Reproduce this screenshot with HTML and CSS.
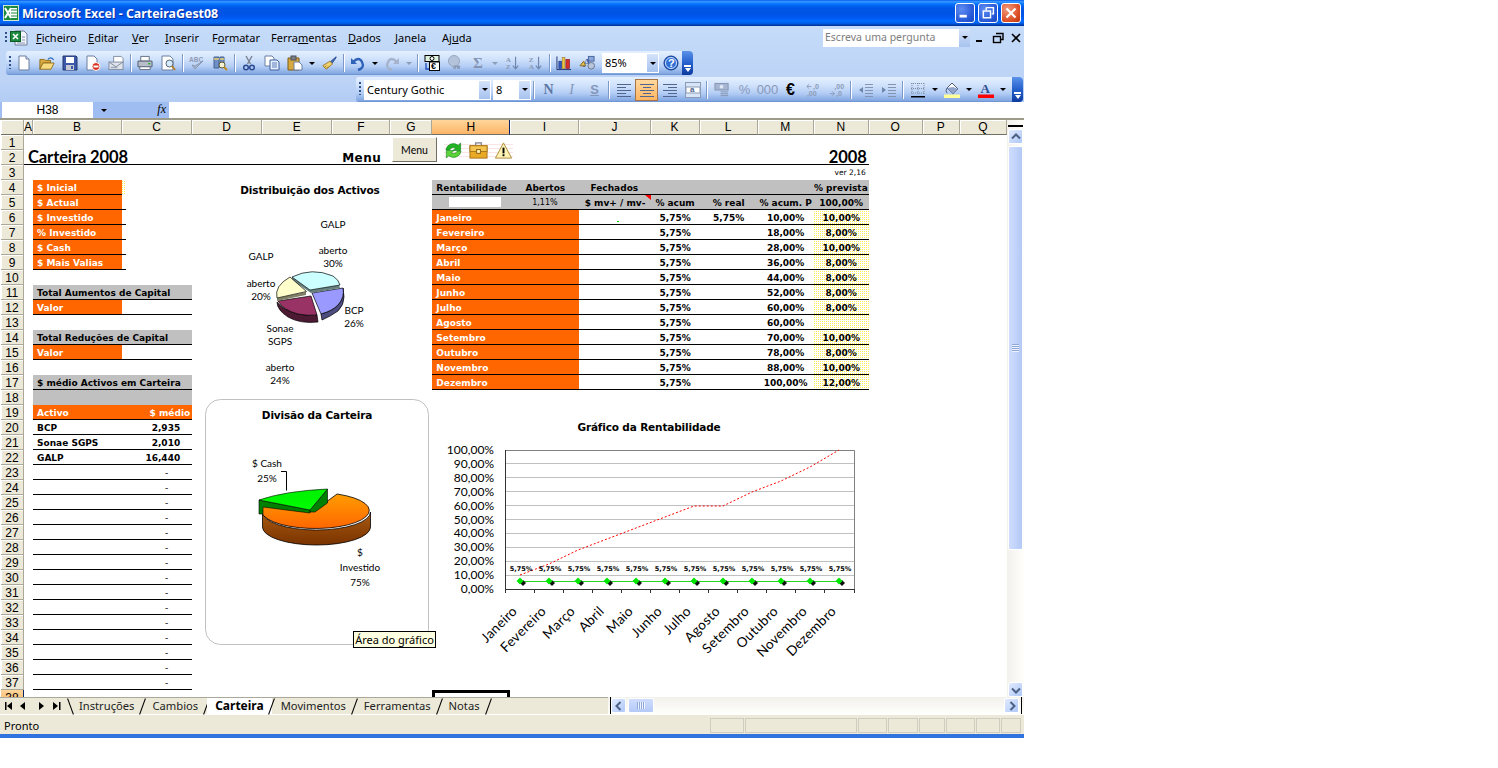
FILE: index.html
```html
<!DOCTYPE html>
<html lang="pt">
<head>
<meta charset="utf-8">
<title>Microsoft Excel - CarteiraGest08</title>
<link rel="stylesheet" href="styles.css">
</head>
<body>
<div class="window">
  <header class="titlebar">
    <svg class="appicon" viewBox="0 0 16 16"><rect x="0.5" y="0.5" width="15" height="15" fill="#1c8a3e" stroke="#cfe8d4"/><rect x="7" y="3" width="7" height="10" fill="#fff"/><path d="M2 3l6 10M8 3L2 13" stroke="#fff" stroke-width="2"/><path d="M8 5h6M8 8h6M8 11h6" stroke="#1c8a3e"/></svg>
    <span class="wintitle">Microsoft Excel - CarteiraGest08</span>
    <span class="capbtns">
      <span class="cap"><svg viewBox="0 0 20 20"><rect x="4" y="12" width="8" height="3" fill="#fff"/></svg></span>
      <span class="cap"><svg viewBox="0 0 20 20"><path d="M8 4h8v7h-2M8 4v3" fill="none" stroke="#fff" stroke-width="1.6"/><rect x="4.8" y="7.8" width="8" height="7.5" fill="none" stroke="#fff" stroke-width="1.6"/></svg></span>
      <span class="cap close"><svg viewBox="0 0 20 20"><path d="M5 5l10 10M15 5L5 15" stroke="#fff" stroke-width="2.4"/></svg></span>
    </span>
  </header>

  <div class="command">
    <div class="menubar">
      <span class="grip"></span>
      <svg class="docicon" viewBox="0 0 18 16"><path d="M5 1h9l3 3v11H5z" fill="#f2f4fb" stroke="#6e7f9e"/><rect x="0.5" y="1.5" width="10" height="10" fill="#1c8a3e" stroke="#0d5c25"/><path d="M3 4l5 5M8 4L3 9" stroke="#fff" stroke-width="1.6"/><path d="M12 7h3M12 10h3M7 13h8" stroke="#8494b0"/></svg>
      <nav class="menus">
        <span class="menu m1"><u>F</u>icheiro</span>
        <span class="menu m2"><u>E</u>ditar</span>
        <span class="menu m3"><u>V</u>er</span>
        <span class="menu m4"><u>I</u>nserir</span>
        <span class="menu m5">F<u>o</u>rmatar</span>
        <span class="menu m6">Ferra<u>m</u>entas</span>
        <span class="menu m7"><u>D</u>ados</span>
        <span class="menu m8"><u>J</u>anela</span>
        <span class="menu m9">Aj<u>u</u>da</span>
      </nav>
      <span class="ask"><span class="asktext">Escreva uma pergunta</span><span class="askdrop"><i class="dd-tri"></i></span></span>
      <span class="doccaps">
        <svg viewBox="0 0 12 12"><rect x="2" y="8" width="6" height="2" fill="#000"/></svg>
        <svg viewBox="0 0 12 12"><path d="M4 1.5h7v6H9" fill="none" stroke="#000" stroke-width="1.4"/><rect x="1.5" y="4.5" width="7" height="6" fill="none" stroke="#000" stroke-width="1.4"/></svg>
        <svg viewBox="0 0 12 12"><path d="M2 2l8 8M10 2l-8 8" stroke="#000" stroke-width="1.6"/></svg>
      </span>
    </div>

    <div class="toolbar tb1">
      <span class="tgrip"></span>
      <span class="btn"><svg viewBox="0 0 16 16"><path d="M3 1h7l3 3v11H3z" fill="#fff" stroke="#6b7f9f"/><path d="M10 1v3h3" fill="#dfe6f4" stroke="#6b7f9f"/></svg></span>
      <span class="btn"><svg viewBox="0 0 18 16"><path d="M1 4h5l1 1h6v3H5l-4 7z" fill="#d9a93f" stroke="#8a6a1a"/><path d="M1 15l3.5-7H17l-3.5 7z" fill="#f9dc82" stroke="#8a6a1a"/><path d="M10 4q2.500-3 5-1l1.500 1.500" fill="none" stroke="#2b6cc4" stroke-width="1.300"/></svg></span>
      <span class="btn"><svg viewBox="0 0 16 16"><path d="M1 1h13l1 1v13H1z" fill="#3c58a8" stroke="#24366e"/><rect x="4" y="2" width="8" height="6" fill="#fff"/><rect x="4" y="10" width="8" height="5" fill="#c8c8d0"/><rect x="9" y="11" width="2" height="3" fill="#3c58a8"/></svg></span>
      <span class="btn"><svg viewBox="0 0 16 16"><path d="M2 1h7l3 3v11H2z" fill="#fff" stroke="#6b7f9f"/><circle cx="11" cy="11.500" r="4" fill="#d8301c" stroke="#fff"/><rect x="8.500" y="10.500" width="5" height="2" fill="#fff"/></svg></span>
      <span class="btn"><svg viewBox="0 0 17 16"><path d="M6 1h8l2 2v5H6z" fill="#fff" stroke="#7f8ba0"/><rect x="1" y="7" width="15" height="8" fill="#dfe3ea" stroke="#7f8ba0"/><path d="M1 7l7.500 5L16 7" fill="none" stroke="#7f8ba0"/><rect x="3" y="12" width="7" height="1.500" fill="#9aa7bd"/></svg></span>
      <span class="sep"></span>
      <span class="btn"><svg viewBox="0 0 17 16"><path d="M4 1h9v5H4z" fill="#fff" stroke="#5f6b80"/><path d="M1 6h15v6H1z" fill="#b7bdc9" stroke="#4f5a6e"/><path d="M3 12h11v3H3z" fill="#fff" stroke="#5f6b80"/><rect x="12" y="8" width="2" height="1.500" fill="#18b018"/></svg></span>
      <span class="btn"><svg viewBox="0 0 16 16"><path d="M2 1h8l3 3v11H2z" fill="#fff" stroke="#6b7f9f"/><circle cx="9.500" cy="8.500" r="3.500" fill="#d5ecff" stroke="#5a6472"/><path d="M12 11l3 4" stroke="#b3802d" stroke-width="2"/></svg></span>
      <span class="sep"></span>
      <span class="btn"><svg viewBox="0 0 16 16"><text x="0" y="6.500" class="ic-t" fill="#8d9ab6">ABC</text><path d="M3 10l3 4 8-8-8 5z" fill="#a9b6cf" stroke="#8d9ab6"/></svg></span>
      <span class="btn"><svg viewBox="0 0 16 16"><path d="M2 2h5v11H2zM8 2h4v8H8z" fill="#6f8fc8" stroke="#46608f"/><path d="M2 4h5M8 4h4" stroke="#e7d06c" stroke-width="1.500"/><circle cx="10" cy="10" r="3" fill="#f2f2d0" stroke="#5f5a30"/><path d="M12 12l3 3" stroke="#c08a20" stroke-width="2"/></svg></span>
      <span class="sep"></span>
      <span class="btn"><svg viewBox="0 0 16 16"><path d="M5 1l4.500 8M11 1L6.500 9" stroke="#7a8290" stroke-width="1.400" fill="none"/><circle cx="5" cy="12.500" r="2.300" fill="none" stroke="#2c4a93" stroke-width="1.500"/><circle cx="11" cy="12.500" r="2.300" fill="none" stroke="#2c4a93" stroke-width="1.500"/></svg></span>
      <span class="btn"><svg viewBox="0 0 16 16"><path d="M1 1h7l2 2v8H1z" fill="#fff" stroke="#6b7f9f"/><path d="M6 5h7l2 2v8H6z" fill="#e6f0ff" stroke="#3d5f9e"/><path d="M8 8h5M8 10h5M8 12h5" stroke="#5c7db8"/></svg></span>
      <span class="btn"><svg viewBox="0 0 16 16"><path d="M1 3h11v12H1z" fill="#d7a93e" stroke="#7a5a1a"/><rect x="4" y="1" width="5" height="4" fill="#7a7f8a" stroke="#4b4f58"/><path d="M7 7h5l3 3v5H7z" fill="#fff" stroke="#6b7f9f"/></svg></span>
      <span class="dd"><i class="dd-tri"></i></span>
      <span class="btn"><svg viewBox="0 0 18 16"><path d="M17 1l-7 6 2 2 5-7z" fill="#4a6fb8" stroke="#2c4a93"/><path d="M10 6L2 11l4 4 7-6z" fill="#efd06a" stroke="#94752a"/><path d="M4 13l2-2M6 14l2-2" stroke="#94752a"/></svg></span>
      <span class="sep"></span>
      <span class="btn"><svg viewBox="0 0 16 16"><path d="M3 7q6-6 9 0t-4 8" fill="none" stroke="#2e62b8" stroke-width="2.400"/><path d="M1 3v6h6z" fill="#2e62b8"/></svg></span>
      <span class="dd"><i class="dd-tri"></i></span>
      <span class="btn"><svg viewBox="0 0 16 16"><path d="M13 7q-6-6-9 0t4 8" fill="none" stroke="#a5b4cc" stroke-width="2.400"/><path d="M15 3v6H9z" fill="#a5b4cc"/></svg></span>
      <span class="dd off"><i class="dd-tri"></i></span>
      <span class="sep"></span>
      <span class="btn"><svg viewBox="0 0 16 16"><rect x="1" y="0.500" width="14" height="6" fill="#dff2df" stroke="#000"/><circle cx="8" cy="3.500" r="2" fill="#fff" stroke="#000"/><rect x="5.500" y="7" width="10" height="8.500" fill="#fff" stroke="#000"/><text x="7" y="14" class="ic-b">€</text><path d="M2 8v6h3" fill="none" stroke="#1f49b8" stroke-width="1.300"/></svg></span>
      <span class="btn"><svg viewBox="0 0 16 16"><circle cx="7" cy="6" r="5.500" fill="#b4c3da" stroke="#98a7c0"/><path d="M7 11q4 1 6 0M6 13h3M10 13h3" stroke="#8a99b3" stroke-width="1.500" fill="none"/></svg></span>
      <span class="btn"><span class="glyph gray-sig">Σ</span></span>
      <span class="dd off"><i class="dd-tri"></i></span>
      <span class="btn"><svg viewBox="0 0 18 16"><text x="2" y="7" class="ic-m" fill="#8a99b3">A</text><text x="2" y="15" class="ic-m" fill="#8a99b3">Z</text><path d="M13 1v13M10 11l3 3.500 3-3.500" fill="none" stroke="#6f86ad" stroke-width="1.300"/></svg></span>
      <span class="btn"><svg viewBox="0 0 18 16"><text x="2" y="7" class="ic-m" fill="#8a99b3">Z</text><text x="2" y="15" class="ic-m" fill="#8a99b3">A</text><path d="M13 1v13M10 11l3 3.500 3-3.500" fill="none" stroke="#6f86ad" stroke-width="1.300"/></svg></span>
      <span class="sep"></span>
      <span class="btn"><svg viewBox="0 0 17 16"><path d="M1 1v14h15" fill="none" stroke="#1d2f6b"/><rect x="3" y="6" width="3" height="8" fill="#2e55c0" stroke="#1d2f6b" stroke-width=".5"/><rect x="6.500" y="2" width="3" height="12" fill="#efc947" stroke="#806515" stroke-width=".5"/><rect x="10.500" y="4" width="4" height="10" fill="#d32f2f" stroke="#7a1010" stroke-width=".5"/></svg></span>
      <span class="btn"><svg viewBox="0 0 17 16"><text x="4" y="12" class="ic-l" fill="#3b5ba6">A</text><path d="M1 11l4-5 2 5z" fill="#e4c050" stroke="#86691a"/><circle cx="13" cy="11" r="3.500" fill="#b9c6dc" stroke="#64748f"/><rect x="10" y="1" width="6" height="5" fill="#8aa5da" stroke="#47639b"/></svg></span>
      <span class="combo zoombox"><span class="combotext">85%</span><span class="combodrop"><i class="dd-tri"></i></span></span>
      <span class="btn"><svg viewBox="0 0 16 16"><circle cx="8" cy="8" r="7" fill="#2f6fd4" stroke="#12388c"/><circle cx="8" cy="8" r="5.500" fill="none" stroke="#cfe1ff"/><text x="5" y="12" class="ic-q">?</text></svg></span>
      <span class="chevron"><i></i><i class="tri"></i></span>
    </div>

    <div class="toolbar tb2">
      <span class="tgrip"></span>
      <span class="combo fontbox"><span class="combotext">Century Gothic</span><span class="combodrop"><i class="dd-tri"></i></span></span>
      <span class="combo sizebox"><span class="combotext">8</span><span class="combodrop"><i class="dd-tri"></i></span></span>
      <span class="sep"></span>
      <span class="btn"><span class="glyph fmt bold">N</span></span>
      <span class="btn"><span class="glyph fmt ital">I</span></span>
      <span class="btn"><span class="glyph fmt undl">S</span></span>
      <span class="sep"></span>
      <span class="btn"><svg viewBox="0 0 16 16"><path d="M1 2.500h14M1 5.500h9M1 8.500h14M1 11.500h9M1 14.500h14" stroke="#50668f"/></svg></span>
      <span class="btn on"><svg viewBox="0 0 16 16"><path d="M1 2.500h14M4 5.500h8M1 8.500h14M4 11.500h8M1 14.500h14" stroke="#50668f"/></svg></span>
      <span class="btn"><svg viewBox="0 0 16 16"><path d="M1 2.500h14M6 5.500h9M1 8.500h14M6 11.500h9M1 14.500h14" stroke="#50668f"/></svg></span>
      <span class="btn"><svg viewBox="0 0 16 16"><rect x="0.500" y="0.500" width="15" height="15" fill="#d8e4f7" stroke="#8a9bb8"/><rect x="1" y="5" width="14" height="6" fill="#fff" stroke="#8a9bb8"/><text x="5" y="10" class="ic-s" fill="#50668f">a</text></svg></span>
      <span class="sep"></span>
      <span class="btn"><svg viewBox="0 0 17 16"><rect x="1" y="1" width="14" height="7" fill="#a6b6d2" stroke="#8393b0"/><circle cx="8" cy="4.500" r="2" fill="#dfe6f4"/><path d="M7 10h8M7 12h8M7 14h8" stroke="#8393b0"/></svg></span>
      <span class="btn"><span class="glyph pct">%</span></span>
      <span class="btn"><span class="glyph pct">000</span></span>
      <span class="btn"><span class="glyph euro">€</span></span>
      <span class="btn"><svg viewBox="0 0 18 16"><path d="M1 4h5M1 4l2.500-2.500M1 4l2.500 2.500" fill="none" stroke="#8b9bb8"/><text x="8" y="7" class="ic-s" fill="#8b9bb8">,0</text><text x="1" y="15" class="ic-s" fill="#8b9bb8">,00</text></svg></span>
      <span class="btn"><svg viewBox="0 0 18 16"><text x="6" y="7" class="ic-s" fill="#8b9bb8">,00</text><path d="M1 12h5M6 12L3.500 9.500M6 12l-2.500 2.500" fill="none" stroke="#8b9bb8"/><text x="8" y="15" class="ic-s" fill="#8b9bb8">,0</text></svg></span>
      <span class="sep"></span>
      <span class="btn"><svg viewBox="0 0 16 16"><path d="M7 2.500h8M7 5.500h8M7 8.500h8M7 11.500h8M7 14.500h8" stroke="#8393b0"/><path d="M1 8l4-3v6z" fill="#6f86ad"/></svg></span>
      <span class="btn"><svg viewBox="0 0 16 16"><path d="M7 2.500h8M7 5.500h8M7 8.500h8M7 11.500h8M7 14.500h8" stroke="#8393b0"/><path d="M5 8L1 5v6z" fill="#6f86ad"/></svg></span>
      <span class="sep"></span>
      <span class="btn"><svg viewBox="0 0 16 16"><path d="M1 1.500h14M1 6.500h14M1 11h14M2 1v12M8 1v12M14 1v12" stroke="#7f8ba0" stroke-dasharray="1 1"/><rect x="1" y="14" width="14" height="1.500" fill="#000"/></svg></span>
      <span class="dd"><i class="dd-tri"></i></span>
      <span class="btn"><svg viewBox="0 0 16 16"><path d="M8 1l6 6-5 5-6-6z" fill="#fff" stroke="#52607c"/><path d="M3 6l6-1 5 2-5 5z" fill="#8fa5cc"/><path d="M3 6q-2 3 0 5" stroke="#52607c" fill="none"/><rect x="0" y="12.500" width="16" height="3.500" fill="#ffff99"/></svg></span>
      <span class="dd"><i class="dd-tri"></i></span>
      <span class="btn"><svg viewBox="0 0 16 16"><text x="2.500" y="11" class="ic-a" fill="#2d4a8f">A</text><rect x="0" y="12.500" width="16" height="3.500" fill="#ff0000"/></svg></span>
      <span class="dd"><i class="dd-tri"></i></span>
      <span class="chevron"><i></i><i class="tri"></i></span>
    </div>

    <div class="formula">
      <span class="namebox">H38</span>
      <span class="namedrop"><i class="dd-tri"></i></span>
      <span class="fx">fx</span>
      <span class="input"></span>
    </div>
  </div>

  <div class="workarea">
    <div class="sheet">
      <table class="grid">
        <colgroup>
          <col class="w-h"><col class="w-a"><col class="w-b"><col class="w-c"><col class="w-c"><col class="w-c"><col class="w-f"><col class="w-g"><col class="w-hh"><col class="w-i"><col class="w-j"><col class="w-k"><col class="w-l"><col class="w-m"><col class="w-n"><col class="w-o"><col class="w-p"><col class="w-q">
        </colgroup>
        <tr class="heads"><th></th><th>A</th><th>B</th><th>C</th><th>D</th><th>E</th><th>F</th><th>G</th><th class="hi">H</th><th>I</th><th>J</th><th>K</th><th>L</th><th>M</th><th>N</th><th>O</th><th>P</th><th>Q</th></tr>
        <tr><th>1</th><td colspan="17"></td></tr>
        <tr><th>2</th><td class="bb big" colspan="5">Carteira 2008</td><td class="bb menuword">Menu</td><td class="bb" colspan="7"></td><td class="bb big right">2008</td><td colspan="3"></td></tr>
        <tr><th>3</th><td colspan="13"></td><td class="small right">ver 2,16</td><td colspan="3"></td></tr>
        <tr><th>4</th><td></td><td class="or">$ Inicial</td><td class="dotc"></td><td colspan="4"></td><td class="gr bb">Rentabilidade</td><td class="gr bb pi">Abertos</td><td class="gr bb pj">Fechados</td><td class="gr bb" colspan="3"></td><td class="gr bb right tight">% prevista</td><td colspan="3"></td></tr>
        <tr><th>5</th><td></td><td class="or">$ Actual</td><td></td><td colspan="4"></td><td class="gr bb pw"><i class="whitebox"></i></td><td class="gr bb ctr plain">1,11%</td><td class="gr bb ctr note">$ mv+ / mv-</td><td class="gr bb ctr">% acum</td><td class="gr bb ctr">% real</td><td class="gr bb ctr">% acum. P</td><td class="gr bb ctr">100,00%</td><td colspan="3"></td></tr>
        <tr><th>6</th><td></td><td class="or">$ Investido</td><td></td><td colspan="4"></td><td class="or2" colspan="2">Janeiro</td><td class="bb ctr"><i class="tick"></i></td><td class="bb ctr b">5,75%</td><td class="bb ctr b">5,75%</td><td class="bb ctr b">10,00%</td><td class="bb ctr b dots">10,00%</td><td colspan="3"></td></tr>
        <tr><th>7</th><td></td><td class="or">% Investido</td><td></td><td colspan="4"></td><td class="or2" colspan="2">Fevereiro</td><td class="bb"></td><td class="bb ctr b">5,75%</td><td class="bb"></td><td class="bb ctr b">18,00%</td><td class="bb ctr b dots">8,00%</td><td colspan="3"></td></tr>
        <tr><th>8</th><td></td><td class="or">$ Cash</td><td></td><td colspan="4"></td><td class="or2" colspan="2">Março</td><td class="bb"></td><td class="bb ctr b">5,75%</td><td class="bb"></td><td class="bb ctr b">28,00%</td><td class="bb ctr b dots">10,00%</td><td colspan="3"></td></tr>
        <tr><th>9</th><td></td><td class="or">$ Mais Valias</td><td></td><td colspan="4"></td><td class="or2" colspan="2">Abril</td><td class="bb"></td><td class="bb ctr b">5,75%</td><td class="bb"></td><td class="bb ctr b">36,00%</td><td class="bb ctr b dots">8,00%</td><td colspan="3"></td></tr>
        <tr><th>10</th><td colspan="7"></td><td class="or2" colspan="2">Maio</td><td class="bb"></td><td class="bb ctr b">5,75%</td><td class="bb"></td><td class="bb ctr b">44,00%</td><td class="bb ctr b dots">8,00%</td><td colspan="3"></td></tr>
        <tr><th>11</th><td></td><td class="gr bb" colspan="2">Total Aumentos de Capital</td><td colspan="4"></td><td class="or2" colspan="2">Junho</td><td class="bb"></td><td class="bb ctr b">5,75%</td><td class="bb"></td><td class="bb ctr b">52,00%</td><td class="bb ctr b dots">8,00%</td><td colspan="3"></td></tr>
        <tr><th>12</th><td></td><td class="or2">Valor</td><td class="bb"></td><td colspan="4"></td><td class="or2" colspan="2">Julho</td><td class="bb"></td><td class="bb ctr b">5,75%</td><td class="bb"></td><td class="bb ctr b">60,00%</td><td class="bb ctr b dots">8,00%</td><td colspan="3"></td></tr>
        <tr><th>13</th><td colspan="7"></td><td class="or2" colspan="2">Agosto</td><td class="bb"></td><td class="bb ctr b">5,75%</td><td class="bb"></td><td class="bb ctr b">60,00%</td><td class="bb ctr b dots"></td><td colspan="3"></td></tr>
        <tr><th>14</th><td></td><td class="gr bb" colspan="2">Total Reduções de Capital</td><td colspan="4"></td><td class="or2" colspan="2">Setembro</td><td class="bb"></td><td class="bb ctr b">5,75%</td><td class="bb"></td><td class="bb ctr b">70,00%</td><td class="bb ctr b dots">10,00%</td><td colspan="3"></td></tr>
        <tr><th>15</th><td></td><td class="or2">Valor</td><td class="bb"></td><td colspan="4"></td><td class="or2" colspan="2">Outubro</td><td class="bb"></td><td class="bb ctr b">5,75%</td><td class="bb"></td><td class="bb ctr b">78,00%</td><td class="bb ctr b dots">8,00%</td><td colspan="3"></td></tr>
        <tr><th>16</th><td colspan="7"></td><td class="or2" colspan="2">Novembro</td><td class="bb"></td><td class="bb ctr b">5,75%</td><td class="bb"></td><td class="bb ctr b">88,00%</td><td class="bb ctr b dots">10,00%</td><td colspan="3"></td></tr>
        <tr><th>17</th><td></td><td class="gr bb" colspan="2">$ médio Activos em Carteira</td><td colspan="4"></td><td class="or2" colspan="2">Dezembro</td><td class="bb"></td><td class="bb ctr b">5,75%</td><td class="bb"></td><td class="bb ctr b">100,00%</td><td class="bb ctr b dots">12,00%</td><td colspan="3"></td></tr>
        <tr><th>18</th><td></td><td class="gr" colspan="2"></td><td colspan="14"></td></tr>
        <tr><th>19</th><td></td><td class="or2">Activo</td><td class="or2 right r2">$ médio</td><td colspan="14"></td></tr>
        <tr><th>20</th><td></td><td class="bb b">BCP</td><td class="bb b right val">2,935</td><td colspan="14"></td></tr>
        <tr><th>21</th><td></td><td class="bb b">Sonae SGPS</td><td class="bb b right val">2,010</td><td colspan="14"></td></tr>
        <tr><th>22</th><td></td><td class="bb b">GALP</td><td class="bb b right val">16,440</td><td colspan="14"></td></tr>
        <tr><th>23</th><td></td><td class="bb"></td><td class="bb dash">-</td><td colspan="14"></td></tr>
        <tr><th>24</th><td></td><td class="bb"></td><td class="bb dash">-</td><td colspan="14"></td></tr>
        <tr><th>25</th><td></td><td class="bb"></td><td class="bb dash">-</td><td colspan="14"></td></tr>
        <tr><th>26</th><td></td><td class="bb"></td><td class="bb dash">-</td><td colspan="14"></td></tr>
        <tr><th>27</th><td></td><td class="bb"></td><td class="bb dash">-</td><td colspan="14"></td></tr>
        <tr><th>28</th><td></td><td class="bb"></td><td class="bb dash">-</td><td colspan="14"></td></tr>
        <tr><th>29</th><td></td><td class="bb"></td><td class="bb dash">-</td><td colspan="14"></td></tr>
        <tr><th>30</th><td></td><td class="bb"></td><td class="bb dash">-</td><td colspan="14"></td></tr>
        <tr><th>31</th><td></td><td class="bb"></td><td class="bb dash">-</td><td colspan="14"></td></tr>
        <tr><th>32</th><td></td><td class="bb"></td><td class="bb dash">-</td><td colspan="14"></td></tr>
        <tr><th>33</th><td></td><td class="bb"></td><td class="bb dash">-</td><td colspan="14"></td></tr>
        <tr><th>34</th><td></td><td class="bb"></td><td class="bb dash">-</td><td colspan="14"></td></tr>
        <tr><th>35</th><td></td><td class="bb"></td><td class="bb dash">-</td><td colspan="14"></td></tr>
        <tr><th>36</th><td></td><td class="bb"></td><td class="bb dash">-</td><td colspan="14"></td></tr>
        <tr><th>37</th><td></td><td class="bb"></td><td class="bb dash">-</td><td colspan="14"></td></tr>
        <tr><th class="hi">38</th><td colspan="7"></td><td class="sel"></td><td colspan="9"></td></tr>
      </table>

      <svg class="overlay" viewBox="0 120 1007 577" aria-label="Gráficos">
        <defs>
          <linearGradient id="orTop" x1="0" y1="0" x2="0" y2="1"><stop offset="0" stop-color="#ff9d00"/><stop offset="1" stop-color="#ff6600"/></linearGradient>
          <linearGradient id="orSide" x1="0" y1="0" x2="0" y2="1"><stop offset="0" stop-color="#a85a10"/><stop offset="1" stop-color="#7a3300"/></linearGradient>
          <linearGradient id="grTop" x1="0" y1="0" x2="0" y2="1"><stop offset="0" stop-color="#00f000"/><stop offset="1" stop-color="#00ff00"/></linearGradient>
          <g id="gd"><path d="M0-3.500L3.500 0 0 3.500-3.500 0z" fill="#00e600"/></g>
          <g id="bd"><path d="M0-3L3 0 0 3-3 0z" fill="#101010"/></g>
        </defs>

        <!-- Distribuição dos Activos -->
        <text class="ct" x="310" y="194">Distribuição dos Activos</text>
        <text class="cl" x="333" y="228">GALP</text>
        <text class="cl" x="333" y="254">aberto</text>
        <text class="cl" x="333" y="267">30%</text>
        <text class="cl" x="261" y="260">GALP</text>
        <text class="cl" x="261" y="287">aberto</text>
        <text class="cl" x="261" y="300">20%</text>
        <text class="cl" x="354" y="314">BCP</text>
        <text class="cl" x="354" y="327">26%</text>
        <text class="cl" x="280" y="332">Sonae</text>
        <text class="cl" x="280" y="345">SGPS</text>
        <text class="cl" x="280" y="371">aberto</text>
        <text class="cl" x="280" y="384">24%</text>
        <path d="M321 314Q332 311 338 305Q345 297 343 288L344 297Q344 305 338 311Q331 316 322 320Z" fill="#4d4d80" stroke="#000" stroke-width=".7"/>
        <path d="M312 293L343 288Q345 297 338 305Q332 311 321 314Z" fill="#9999ff" stroke="#000" stroke-width=".7"/>
        <path d="M277 302Q283 310 298 314Q308 316 317 315L318 322Q300 324 288 317Q277 310 277 302Z" fill="#4d1a33" stroke="#000" stroke-width=".7"/>
        <path d="M311 296L278 301Q283 310 298 314Q308 316 317 315Z" fill="#993366" stroke="#000" stroke-width=".7"/>
        <path d="M292 277L310 290L339 285L340 288L311 293L292 280Z" fill="#668080"/>
        <path d="M310 290L292 277Q312 267 333 276Q339 280 340 285Z" fill="#ccffff" stroke="#000" stroke-width=".7"/>
        <path d="M306 292L277 298L277 301L306 295Z" fill="#808066"/>
        <path d="M306.500 291.500L277 298Q274 286 290 277Z" fill="#ffffcc" stroke="#000" stroke-width=".7"/>

        <!-- Divisão da Carteira -->
        <rect class="frame" x="205.500" y="399.500" width="223" height="245" rx="15"/>
        <text class="ct" x="317" y="419">Divisão da Carteira</text>
        <text class="cl" x="267" y="467">$ Cash</text>
        <text class="cl" x="267" y="482">25%</text>
        <path d="M281 471.500h5.500v19" fill="none" stroke="#000"/>
        <text class="cl" x="360" y="556">$</text>
        <text class="cl" x="360" y="571">Investido</text>
        <text class="cl" x="360" y="586">75%</text>
        <path d="M262.500 512A54 18 0 0 0 370.500 512L370.500 527A54 18 0 0 1 262.500 527Z" fill="url(#orSide)" stroke="#000" stroke-width=".8"/>
        <path d="M314 511L337 494A54 18 0 1 1 263 506Z" fill="url(#orTop)" stroke="#000" stroke-width=".8"/>
        <path d="M259 500L310 510L310 513L263 507L263 514L259 514Z" fill="#008000" stroke="#000" stroke-width=".6"/>
        <path d="M327.500 489L327.500 503L315 512L310 512L310 510Z" fill="#008000" stroke="#000" stroke-width=".6"/>
        <path d="M259 500Q285 491 327.500 489L310 510Z" fill="url(#grTop)" stroke="#000" stroke-width=".6"/>

        <!-- Gráfico da Rentabilidade -->
        <text class="ct" x="649" y="431">Gráfico da Rentabilidade</text>
        <path class="gl" d="M505.500 575.500H855M505.500 561.500H855M505.500 547.500H855M505.500 533.500H855M505.500 519.500H855M505.500 505.500H855M505.500 491.500H855M505.500 477.500H855M505.500 463.500H855"/>
        <path class="axis-a" d="M505.500 450.500H854.500V589"/>
        <path class="axis-b" d="M505.500 450V593M505 589.500H855M534.500 589v4M563.500 589v4M592.500 589v4M621.500 589v4M650.500 589v4M679.500 589v4M708.500 589v4M737.500 589v4M766.500 589v4M795.500 589v4M824.500 589v4M854.500 589v4"/>
        <g class="yl">
          <text x="494" y="454">100,00%</text><text x="494" y="468">90,00%</text><text x="494" y="482">80,00%</text><text x="494" y="496">70,00%</text><text x="494" y="510">60,00%</text><text x="494" y="524">50,00%</text><text x="494" y="537">40,00%</text><text x="494" y="551">30,00%</text><text x="494" y="565">20,00%</text><text x="494" y="579">10,00%</text><text x="494" y="593">0,00%</text>
        </g>
        <polyline class="red" points="520,575 549,564 578,550 607,539 636,528 665,517 694,506 723,506 752,492 781,481 810,467 839,450"/>
        <path class="green" d="M520 581.500H839"/>
        <use href="#bd" x="523" y="583"/><use href="#bd" x="552" y="583"/><use href="#bd" x="581" y="583"/><use href="#bd" x="610" y="583"/><use href="#bd" x="639" y="583"/><use href="#bd" x="668" y="583"/><use href="#bd" x="697" y="583"/><use href="#bd" x="726" y="583"/><use href="#bd" x="755" y="583"/><use href="#bd" x="784" y="583"/><use href="#bd" x="813" y="583"/><use href="#bd" x="842" y="583"/>
        <use href="#gd" x="520" y="581"/><use href="#gd" x="549" y="581"/><use href="#gd" x="578" y="581"/><use href="#gd" x="607" y="581"/><use href="#gd" x="636" y="581"/><use href="#gd" x="665" y="581"/><use href="#gd" x="694" y="581"/><use href="#gd" x="723" y="581"/><use href="#gd" x="752" y="581"/><use href="#gd" x="781" y="581"/><use href="#gd" x="810" y="581"/><use href="#gd" x="839" y="581"/>
        <g class="dl">
          <text x="521" y="571">5,75%</text><text x="550" y="571">5,75%</text><text x="579" y="571">5,75%</text><text x="608" y="571">5,75%</text><text x="637" y="571">5,75%</text><text x="666" y="571">5,75%</text><text x="695" y="571">5,75%</text><text x="724" y="571">5,75%</text><text x="753" y="571">5,75%</text><text x="782" y="571">5,75%</text><text x="811" y="571">5,75%</text><text x="840" y="571">5,75%</text>
        </g>
        <g class="xl">
          <text transform="translate(518 612) rotate(-45)">Janeiro</text>
          <text transform="translate(547 612) rotate(-45)">Fevereiro</text>
          <text transform="translate(576 612) rotate(-45)">Março</text>
          <text transform="translate(605 612) rotate(-45)">Abril</text>
          <text transform="translate(634 612) rotate(-45)">Maio</text>
          <text transform="translate(663 612) rotate(-45)">Junho</text>
          <text transform="translate(692 612) rotate(-45)">Julho</text>
          <text transform="translate(721 612) rotate(-45)">Agosto</text>
          <text transform="translate(750 612) rotate(-45)">Setembro</text>
          <text transform="translate(779 612) rotate(-45)">Outubro</text>
          <text transform="translate(808 612) rotate(-45)">Novembro</text>
          <text transform="translate(837 612) rotate(-45)">Dezembro</text>
        </g>
      </svg>

      <button class="menubutton" type="button">Menu</button>
      <div class="floaticons">
        <svg viewBox="0 0 20 20"><path d="M2 9.500a8 8 0 0 1 13-5l2.500-2.500v8h-8l2.700-2.700A4.500 4.500 0 0 0 6 9.500z" fill="#22b522" stroke="#0f7a1c" stroke-width=".6"/><path d="M18 10.500a8 8 0 0 1-13 5L2.500 18v-8h8l-2.700 2.700A4.500 4.500 0 0 0 14 10.500z" fill="#5ad437" stroke="#0f7a1c" stroke-width=".6"/></svg>
        <svg viewBox="0 0 20 20"><rect x="7" y="2" width="6" height="4" fill="none" stroke="#8a8f9a" stroke-width="1.500"/><rect x="1" y="5" width="18" height="13" fill="#e8a924" stroke="#a8751a"/><rect x="1" y="5" width="18" height="6" fill="#f4c550" stroke="#a8751a"/><rect x="8" y="9" width="4" height="4" fill="#fff2b0" stroke="#8c5e12"/></svg>
        <svg viewBox="0 0 20 20"><path d="M10 2l8.500 16h-17z" fill="#fff2b5" stroke="#b08a3a"/><rect x="9" y="7" width="2" height="6" fill="#000"/><rect x="9" y="14" width="2" height="2" fill="#000"/></svg>
      </div>
      <div class="tooltip">Área do gráfico</div>
    </div>

    <aside class="vscroll">
      <span class="split"></span>
      <span class="sbtn"><svg viewBox="0 0 10 8"><path d="M1 5.500l4-4 4 4" fill="none" stroke="#4d6185" stroke-width="2"/></svg></span>
      <span class="vthumb"><i></i></span>
      <span class="vtrack"></span>
      <span class="sbtn"><svg viewBox="0 0 10 8"><path d="M1 2.500l4 4 4-4" fill="none" stroke="#4d6185" stroke-width="2"/></svg></span>
    </aside>
  </div>

  <div class="tabstrip">
    <div class="tabnav">
      <svg viewBox="0 0 60 12"><path d="M4 2h1.500v8H4zM11 2v8L6 6zM24 2v8l-5-4zM38 2v8l5-4zM52 2v8l5-4zM58 2h1.500v8H58z" fill="#000"/></svg>
    </div>
    <div class="tabs">
      <span class="tab">Instruções</span>
      <span class="tab">Cambios</span>
      <span class="tab active">Carteira</span>
      <span class="tab">Movimentos</span>
      <span class="tab">Ferramentas</span>
      <span class="tab">Notas</span>
    </div>
    <div class="hscroll">
      <span class="hsplit"></span>
      <span class="sbtn h"><svg viewBox="0 0 8 10"><path d="M5.500 1l-4 4 4 4" fill="none" stroke="#4d6185" stroke-width="2"/></svg></span>
      <span class="hthumb"><i></i></span>
      <span class="htrack"></span>
      <span class="sbtn h"><svg viewBox="0 0 8 10"><path d="M2.500 1l4 4-4 4" fill="none" stroke="#4d6185" stroke-width="2"/></svg></span>
      <span class="hsplit end"></span>
    </div>
  </div>

  <footer class="status">
    <span class="ready">Pronto</span>
    <span class="panels"><i class="p1"></i><i class="p2"></i><i class="p3"></i><i class="p6"></i><i class="p4"></i><i class="p3"></i><i class="p7"></i><i class="p5"></i></span>
  </footer>
</div>
</body>
</html>
```
FILE: styles.css
```css
* { box-sizing: border-box; }
html, body { margin: 0; background: #fff; }
body { font-family: "Noto Sans", "Open Sans", sans-serif; font-size: 11px; color: #000; }
.window { width: 1024px; height: 738px; display: flex; flex-direction: column; overflow: hidden; border-bottom: 4px solid #2f72e0; background: #ece9d8; }

/* title */
.titlebar { height: 26px; flex: none; display: flex; align-items: center; padding: 0 3px 0 3px;
  background: linear-gradient(#0058ee 0, #3593ff 5%, #288eff 9%, #127dff 13%, #036ffc 17%, #0262ee 24%, #0057e5 32%, #0054e3 50%, #0055eb 60%, #005bf5 70%, #026afe 80%, #0062ef 88%, #0052d6 92%, #0040ab 96%, #003092 100%); }
.appicon { width: 16px; height: 16px; }
.wintitle { margin-left: 3px; color: #fff; font: 700 12.400px "Noto Sans", sans-serif; text-shadow: 1px 1px 0 #0a2f9e; white-space: nowrap; }
.capbtns { margin-left: auto; display: flex; gap: 3px; }
.cap { width: 20px; height: 20px; border: 1px solid #fff; border-radius: 3px; background: radial-gradient(circle at 30% 30%, #5f8cf2, #2456d6 70%, #1e46b8); display: block; }
.cap svg { display: block; width: 18px; height: 18px; }
.cap.close { background: radial-gradient(circle at 30% 30%, #f09a7c, #dc4f26 65%, #b8300f); }

/* command area */
.command { flex: none; height: 94px; background: linear-gradient(#c5dbf9, #bcd3f6 60%, #a9c5f3); }
.menubar { height: 25px; display: flex; align-items: center; position: relative; padding: 0 0 2px 5px; }
.grip { width: 2px; height: 11px; background-image: repeating-linear-gradient(#304f86 0 2px, transparent 2px 4px); }
.docicon { width: 18px; height: 16px; margin-left: 3px; }
.menus { display: flex; margin-left: 8px; }
.menu { font-size: 11px; white-space: nowrap; }
.m1 { width: 52px; } .m2 { width: 44px; } .m3 { width: 33px; } .m4 { width: 47px; } .m5 { width: 59px; } .m6 { width: 77px; } .m7 { width: 47px; } .m8 { width: 47px; } .m9 { width: 40px; }
.ask { margin-left: auto; width: 147px; height: 18px; background: #fff; display: flex; align-items: stretch; }
.asktext { flex: 1; padding-left: 2px; color: #7d7d7d; line-height: 17px; font-size: 10.500px; white-space: nowrap; }
.askdrop { width: 11px; background: linear-gradient(#d5e3fa, #a6c2ef); display: flex; align-items: center; justify-content: center; }
.doccaps { display: flex; width: 54px; padding-left: 4px; gap: 6px; }
.doccaps svg { width: 12px; height: 12px; }

.dd-tri { display: block; width: 0; height: 0; border: 3px solid transparent; border-top: 3px solid #000; border-bottom: 0; border-left-width: 3px; border-right-width: 3px; }

.toolbar { display: flex; align-items: center; border-radius: 3px 4px 4px 3px; background: linear-gradient(#e4f0ff, #cfe1fb 35%, #b3cdf5 65%, #7fa5e0 96%, #5f87c7); position: relative; }
.tb1 { margin-left: 6px; width: 687px; height: 24px; padding-left: 6.5px; }
.tb2 { margin-left: 356px; margin-top: 2px; width: 667px; height: 25px; padding-left: 8px; }
.tgrip { position: absolute; left: 3px; top: 5px; width: 2px; height: 13px; background-image: repeating-linear-gradient(#304f86 0 2px, transparent 2px 4px); }
.btn { width: 23px; height: 22px; flex: none; display: flex; align-items: center; justify-content: center; }
.btn svg { width: 16px; height: 16px; display: block; overflow: visible; }
.btn.on { background: linear-gradient(#ffd9a0, #fdb35e); outline: 1px solid #a7744a; outline-offset: -1px; }
.sep { width: 6px; height: 18px; flex: none; position: relative; }
.sep::after { content: ""; position: absolute; left: 2px; top: 0; width: 1px; height: 18px; background: #7b98c8; box-shadow: 1px 0 0 #fff; }
.dd { width: 11px; height: 22px; flex: none; display: flex; align-items: center; justify-content: center; }
.dd.off .dd-tri { border-top-color: #8c9db8; }
.combo { display: flex; background: #fff; height: 20px; flex: none; align-items: stretch; border: 1px solid #fff; }
.combotext { flex: 1; padding-left: 2px; line-height: 18px; white-space: nowrap; overflow: hidden; }
.combodrop { width: 11px; background: linear-gradient(#d5e3fa, #a6c2ef); display: flex; align-items: center; justify-content: center; }
.zoombox { width: 57px; margin: 0 0 0 3.5px; }
.fontbox { width: 127px; }
.sizebox { width: 38px; margin-left: 2px; }
.tb2 .sep { margin: 0; }
.chevron { position: absolute; right: 0; top: 0; bottom: 0; width: 11px; border-radius: 0 4px 4px 0; background: linear-gradient(#5b92ea, #2560cc 50%, #0d3b9e); display: flex; flex-direction: column; align-items: center; justify-content: flex-end; padding-bottom: 3px; gap: 1px; }
.chevron i { display: block; width: 7px; height: 2px; background: #fff; }
.chevron i.tri { width: 0; height: 0; background: none; border: 3.5px solid transparent; border-top: 4px solid #fff; border-bottom: 0; }

.glyph { display: block; font-family: "Liberation Serif", serif; color: #5e77a6; }
.gray-sig { font-size: 15px; font-weight: 700; color: #8494b3; }
.fmt { font-size: 14px; }
.bold { font-weight: 700; }
.ital { font-style: italic; color: #8497bb; }
.undl { font-family: "Liberation Sans", sans-serif; text-decoration: underline; font-weight: 700; color: #8497bb; font-size: 13px; }
.pct { font-family: "Liberation Sans", sans-serif; font-size: 13px; color: #8798b8; }
.euro { font-family: "Liberation Sans", sans-serif; font-size: 16px; font-weight: 700; color: #000; }
.ic-t { font: 700 6.500px "Liberation Sans", sans-serif; }
.ic-b { font: 700 9px "Liberation Sans", sans-serif; fill: #000; }
.ic-m { font: 700 8px "Liberation Serif", serif; }
.ic-l { font: 700 13px "Liberation Serif", serif; }
.ic-q { font: 700 11px "Liberation Sans", sans-serif; fill: #fff; }
.ic-s { font: 700 8px "Liberation Sans", sans-serif; }
.ic-a { font: 700 13px "Liberation Serif", serif; }

.formula { height: 18px; margin-top: 0; display: flex; background: #9fbdf0; border-bottom: 2px solid #9c9a88; padding-left: 2px; }
.namebox { width: 91px; background: #fff; text-align: center; font: 12px/16px "Liberation Sans", sans-serif; }
.namedrop { width: 21px; display: flex; align-items: center; justify-content: center; }
.fx { width: 55px; text-align: right; padding-right: 3px; font: italic 400 12px/15px "Liberation Serif", serif; }
.input { flex: 1; background: #fff; }

/* sheet */
.workarea { display: flex; height: 577px; flex: none; background: #fff; }
.sheet { position: relative; width: 1007px; flex: none; overflow: hidden; background: #fff; }
.grid { table-layout: fixed; width: 1006px; margin-left: 1px; border-collapse: separate; border-spacing: 0; font: 700 9px/12px "DejaVu Sans", sans-serif; }
.w-h { width: 23px; } .w-a { width: 9px; } .w-b { width: 89px; } .w-c { width: 70px; } .w-f { width: 58px; } .w-g { width: 42px; } .w-hh { width: 78px; } .w-i { width: 69px; } .w-j { width: 71px; } .w-k { width: 49px; } .w-l { width: 58px; } .w-m { width: 56px; } .w-n { width: 55px; } .w-o { width: 54px; } .w-p { width: 37px; } .w-q { width: 47px; }
.grid tr { height: 15px; }
.grid th { background: #ece9d8; border-right: 1px solid #aca899; border-bottom: 1px solid #aca899; box-shadow: inset 1px 1px 0 #fff; font: 400 12px/12px "Liberation Sans", sans-serif; text-align: center; padding: 2px 0 0; height: 15px; overflow: hidden; vertical-align: top; }
.heads th { border-bottom: 1px solid #716f64; padding-top: 1px; }
.grid th.hi { background: linear-gradient(#ffd59a, #fbb567); box-shadow: none; border-right: 1px solid #0a246a; }
.grid td { padding: 2px 4px 0; height: 15px; white-space: nowrap; position: relative; vertical-align: top; }
.bb { border-bottom: 1px solid #000; }
.b { font-weight: 700; }
.ctr { text-align: center; padding: 2px 0 0 !important; }
.right { text-align: right; }
.gr { background: #c0c0c0; }
.or, .or2 { background: #ff6600; color: #fff; border-bottom: 1px solid #000; }
.or::after { content: ""; position: absolute; left: 100%; bottom: -1px; width: 4px; height: 1px; background: #000; }
.dotc { background:
  repeating-linear-gradient(#fff 0 1px, transparent 1px 2px) 0 0 / 4px 100% no-repeat,
  repeating-linear-gradient(90deg, #ffee55 0 1px, transparent 1px 2px) 0 0 / 4px 100% no-repeat; }
.grid .big { font: 700 16.500px/13px "Lato", sans-serif; letter-spacing: -.1px; padding-top: 1px; }
.big.right { text-align: right; padding-right: 2px !important; }
.menuword { font: 700 12px/12px "DejaVu Sans", sans-serif; text-align: right; padding-right: 9px !important; letter-spacing: .5px; }
.small { font: 400 7.500px/12px "DejaVu Sans", sans-serif; padding-right: 3px !important; }
.pi { padding-left: 15px !important; }
.pj { padding-left: 11px !important; }
.tight { padding: 2px 1px 0 0 !important; overflow: visible; }
.plain { font-weight: 400; font-size: 8px; }
.grid .pw { padding: 2px 0 0 17px; }
.whitebox { display: block; width: 52px; height: 10px; background: #fff; }
.note::after { content: ""; position: absolute; right: 0; top: 0; border-top: 5px solid #ff0000; border-left: 6px solid transparent; }
.tick { display: inline-block; width: 2px; height: 1px; background: #00d000; margin-left: 5px; vertical-align: -1px; }
.dots { background-color: #fff; background-image:
  repeating-linear-gradient(#fff 0 1px, transparent 1px 2px),
  repeating-linear-gradient(90deg, #ffee55 0 1px, #fff 1px 2px);
  background-attachment: fixed; }
.val { padding-right: 12px !important; }
.r2 { padding-right: 2px !important; }
.dash { text-align: right; padding-right: 24px !important; font-weight: 400; }
.sel { border: 3px solid #000; border-bottom: 0; }

.overlay { position: absolute; left: 0; top: 0; width: 1007px; height: 577px; pointer-events: none; }
.ct { font: 700 10.500px "DejaVu Sans", sans-serif; text-anchor: middle; letter-spacing: -.15px; }
.cl { font: 400 10px "Lato", sans-serif; text-anchor: middle; }
.frame { fill: #fff; stroke: #c0c0c0; }
.gl { stroke: #c0c0c0; fill: none; }
.axis-a { stroke: #808080; fill: none; }
.axis-b { stroke: #333; fill: none; }
.yl text { font: 400 12px "Lato", sans-serif; text-anchor: end; }
.dl text { font: 700 6.500px "DejaVu Sans", sans-serif; text-anchor: middle; }
.xl text { font: 400 13.500px "Lato", sans-serif; text-anchor: end; letter-spacing: .3px; }
.red { fill: none; stroke: #ff0000; stroke-width: 1; stroke-dasharray: 2 2; }
.green { stroke: #22d622; fill: none; }

.menubutton { position: absolute; left: 392px; top: 17px; width: 45px; height: 25px; padding: 0; background: #ece9d8; border: 1px solid; border-color: #fff #716f64 #716f64 #fff; font: 400 10.500px "Lato", sans-serif; color: #000; }
.floaticons { position: absolute; left: 444px; top: 21px; display: flex; gap: 6px; background: repeating-linear-gradient(transparent 0 3px, #fbe4e4 3px 4px); }
.floaticons svg { width: 19px; height: 19px; display: block; }
.tooltip { position: absolute; left: 353px; top: 511px; width: 83px; height: 17px; background: #ffffe1; border: 1px solid #000; font: 400 11px/15px "Noto Sans", sans-serif; text-align: center; white-space: nowrap; }

/* vertical scrollbar */
.vscroll { flex: 1; display: flex; flex-direction: column; background: linear-gradient(90deg, #f3f1ec, #fefefb); align-items: center; padding-top: 5px; }
.split { width: 15px; height: 2px; background: #000; margin-bottom: 2px; flex: none; }
.sbtn { width: 15px; height: 15px; flex: none; display: flex; align-items: center; justify-content: center; background: linear-gradient(135deg, #e1eafe, #aec8f7); border: 1px solid #fff; border-radius: 2px; }
.sbtn svg { width: 10px; height: 8px; }
.sbtn.h svg { width: 8px; height: 10px; }
.vthumb { width: 15px; height: 404px; margin-top: 2px; flex: none; background: linear-gradient(90deg, #cfdcfc, #c1d3fb 50%, #b4c9f6); border: 1px solid #fff; border-radius: 2px; display: flex; align-items: center; justify-content: center; }
.vthumb i { display: block; width: 7px; height: 8px; background: repeating-linear-gradient(#8ea8d9 0 1px, #eef3ff 1px 2px); }
.vtrack { flex: 1; }

/* tabs */
.tabstrip { height: 17px; flex: none; display: flex; background: #ece9d8; border-top: 1px solid #aca899; }
.tabnav { width: 65px; padding-left: 1px; flex: none; }
.tabnav svg { width: 60px; height: 12px; display: block; margin-top: 2px; }
.tabs { display: flex; width: 543px; flex: none; padding-left: 5px; font-size: 11.200px; line-height: 16px; }
.tab { padding: 0 9px; position: relative; white-space: nowrap; color: #222; }
.tab::after { content: ""; position: absolute; right: 0; top: 0; height: 17px; width: 1px; background: #000; transform: rotate(20deg); }
.tab:first-child::before { content: ""; position: absolute; left: 0; top: 0; height: 17px; width: 1px; background: #000; transform: rotate(-20deg); }
.tab.active { background: #fff; font-weight: 700; font-size: 12px; color: #000; padding: 0 8px; }
.hscroll { flex: 1; display: flex; align-items: center; background: linear-gradient(#f3f1ec, #fefefb); height: 17px; margin-top: -1px; }
.hsplit { width: 3px; height: 17px; border-right: 1px solid #000; flex: none; }
.hsplit.end { width: 3px; border-right: 0; border-left: 1px solid #000; margin-left: 2px; }
.hthumb { width: 26px; height: 15px; margin-left: 2px; flex: none; background: linear-gradient(#cfdcfc, #c1d3fb 50%, #b4c9f6); border: 1px solid #fff; border-radius: 2px; display: flex; align-items: center; justify-content: center; }
.hthumb i { display: block; width: 8px; height: 7px; background: repeating-linear-gradient(90deg, #8ea8d9 0 1px, #eef3ff 1px 2px); }
.htrack { flex: 1; }

/* status */
.status { flex: 1; display: flex; align-items: center; justify-content: space-between; background: #ece9d8; border-top: 1px solid #fff; padding: 1px 3px 0 4px; font-size: 11px; }
.panels { display: flex; gap: 1px; }
.panels i { display: block; height: 15px; border: 1px solid #cfcdc0; }
.p1 { width: 34px; } .p2 { width: 112px; } .p3 { width: 29px; } .p6 { width: 30px; } .p4 { width: 26px; } .p7 { width: 24px; } .p5 { width: 20px; }
```
